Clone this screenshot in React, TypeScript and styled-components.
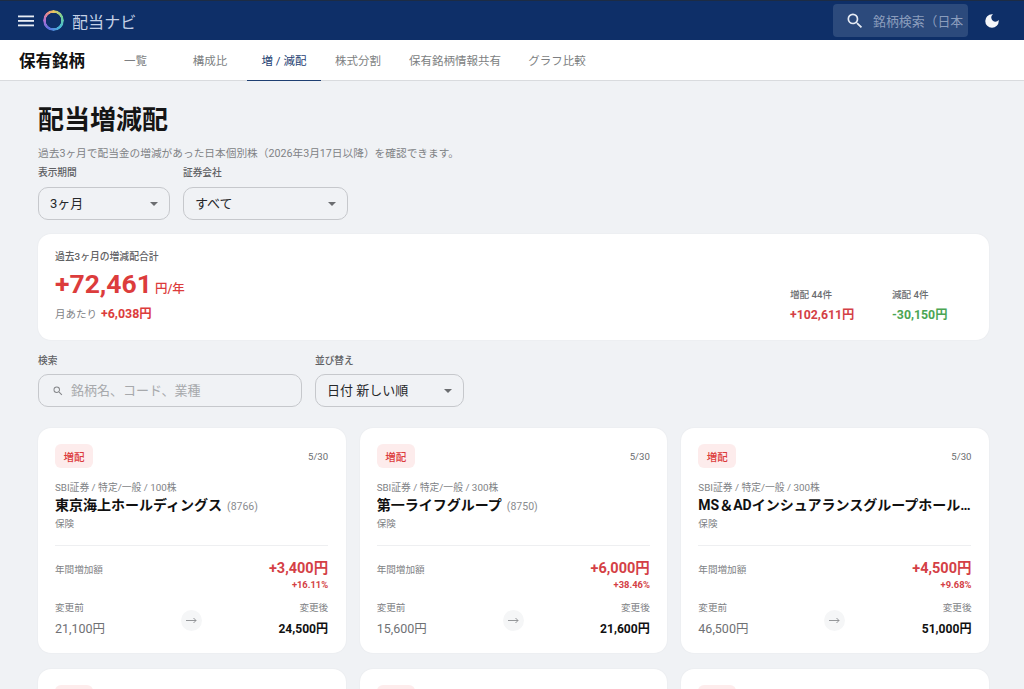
import React from "react";
import styled, { createGlobalStyle } from "styled-components";

const Global = createGlobalStyle`
  html, body { margin: 0; padding: 0; height: 100%; overflow: hidden; background: #f0f2f5; }
  body { font-family: Roboto, "Noto Sans CJK JP", sans-serif; color: #111; }
  * { box-sizing: border-box; }
`;

const Page = styled.div`display: flex; flex-direction: column; height: 689px; overflow: hidden;`;

const Header = styled.header`
  height: 40px; flex: none; background: #0e2f68; border-top: 1px solid #1d2c44;
  display: flex; align-items: center; padding: 0 23px 0 18px; color: #fff;
`;
const Brand = styled.div`display: flex; align-items: center; gap: 8px; margin-left: 9px; flex: 1;`;
const Ring = styled.div`
  width: 21px; height: 21px; border-radius: 50%;
  background: conic-gradient(#e9c65b 0deg, #6ecf9a 70deg, #45b7d8 140deg, #5b6fe0 210deg, #b06fd0 270deg, #e88a8a 320deg, #e9c65b 360deg);
  -webkit-mask: radial-gradient(circle, transparent 7.5px, #000 8px);
  mask: radial-gradient(circle, transparent 7.5px, #000 8px);
`;
const BrandName = styled.span`font-size: 16px; color: #c5d1e6; letter-spacing: 0.1px;`;
const HeaderSearch = styled.div`
  width: 135px; height: 33px; background: #2c4a7c; border-radius: 4px;
  display: flex; align-items: center; gap: 8px; padding: 0 5px 0 12px; overflow: hidden;
`;
const HeaderPlaceholder = styled.span`font-size: 12.9px; color: #8b9dbc; white-space: nowrap; overflow: hidden; flex: 1; min-width: 0;`;
const SearchGlyph = styled.span`flex: none; display: flex;`;
const MoonWrap = styled.div`margin-left: 15px; width: 18px; height: 18px; display: flex;`;

const TabBar = styled.nav`
  height: 41px; flex: none; background: #fff; border-bottom: 1px solid #d9dbde;
  display: flex; align-items: stretch; padding-left: 19px;
`;
const PageName = styled.div`
  font-size: 16.5px; font-weight: 700; width: 79px; display: flex; align-items: center; color: #111; white-space: nowrap;
`;
const Tab = styled.div<{ $active?: boolean; $w?: number }>`
  width: ${(p) => p.$w}px; display: flex; align-items: center; justify-content: center; white-space: nowrap;
  font-size: 11.5px; color: ${(p) => (p.$active ? "#1e3f72" : "#7d7f82")};
  margin-bottom: -1px;
  border-bottom: ${(p) => (p.$active ? "1.5px solid #1e3f72" : "1.5px solid transparent")};
`;

const Main = styled.main`flex: 1; padding: 21px 35px 0 38px; overflow: hidden;`;
const Title = styled.h1`font-size: 26px; font-weight: 700; line-height: 36px; margin: 0; color: #151515;`;
const Sub = styled.p`font-size: 10.7px; line-height: 14px; margin: 9px 0 0; color: #808285; white-space: nowrap;`;
const FilterRow = styled.div`display: flex; gap: 13px; margin-top: 5px;`;
const Field = styled.div<{ $w: number }>`width: ${(p) => p.$w}px; display: flex; flex-direction: column;`;
const Label = styled.label`font-size: 9.7px; line-height: 14px; color: #5f6164; font-weight: 500; margin-bottom: 7px;`;
const SelectBox = styled.div`
  height: 33px; border: 1px solid #c6c8cc; border-radius: 10px;
  display: flex; align-items: center; justify-content: space-between; padding: 0 11px 3px 11px;
  font-size: 13px; color: #26282b;
`;
const Caret = styled.span`width: 0; height: 0; margin-top: 3px; border-left: 4px solid transparent; border-right: 4px solid transparent; border-top: 4px solid #6b6d70;`;
const SearchBox = styled(SelectBox)`justify-content: flex-start; gap: 7px; padding-left: 13px; color: #a7a9ac;`;
const SearchBoxIcon = styled.span`display: flex; margin-top: 3px;`;

const Summary = styled.section`
  height: 106px; margin-top: 14px; background: #fff; border-radius: 13px;
  box-shadow: 0 0 2px rgba(0,0,0,0.06); padding: 16px 17px 0;
  display: flex; justify-content: space-between;
`;
const SummaryLabel = styled.div`font-size: 9.8px; line-height: 14px; color: #5f6164; font-weight: 500;`;
const Total = styled.div`display: flex; align-items: baseline; gap: 3px; margin-top: 4px; color: #dc3c3c; line-height: 32px;`;
const TotalNum = styled.span`font-size: 26.5px; font-weight: 700;`;
const TotalUnit = styled.span`font-size: 12.5px; font-weight: 500;`;
const Monthly = styled.div`display: flex; align-items: baseline; gap: 4px; margin-top: 1px; font-size: 10.5px; color: #808285; line-height: 16px;`;
const MonthlyValue = styled.span`font-size: 12.4px; font-weight: 700; color: #dc3c3c;`;
const Stats = styled.div`display: flex; margin-top: 38px; margin-right: 25px;`;
const Stat = styled.div<{ $w: number }>`width: ${(p) => p.$w}px;`;
const StatLabel = styled.div`font-size: 9.6px; line-height: 14px; color: #6b6d70; font-weight: 500;`;
const StatValue = styled.div<{ $up?: boolean }>`font-size: 12.3px; line-height: 16px; margin-top: 5px; font-weight: 700; white-space: nowrap; color: ${(p) => (p.$up ? "#d43f46" : "#4ba553")};`;

const ControlRow = styled(FilterRow)`margin-top: 14px; ${Label} { margin-bottom: 6px; }`;

const Grid = styled.div`display: grid; grid-template-columns: repeat(3, minmax(0, 1fr)); column-gap: 14px; row-gap: 16px; margin-top: 21px;`;
const Card = styled.article`
  height: 225px; min-width: 0; background: #fff; border-radius: 13px; box-shadow: 0 0 2px rgba(0,0,0,0.06); padding: 16px 17.5px 0 17px;
  display: flex; flex-direction: column;
`;
const CardTop = styled.div`display: flex; justify-content: space-between; align-items: center;`;
const Badge = styled.span`
  font-size: 10.5px; font-weight: 500; color: #dc3c3c; background: #fdecec; border-radius: 6px; height: 24px; width: 38px;
  display: flex; align-items: center; justify-content: center;
`;
const DateText = styled.span`font-size: 9.6px; color: #6b6d70;`;
const Meta = styled.div`font-size: 9.8px; line-height: 13px; color: #808285; margin-top: 13px; white-space: nowrap;`;
const NameRow = styled.div`display: flex; align-items: baseline; gap: 5px; margin-top: 2px; white-space: nowrap; height: 20px; line-height: 19px; min-width: 0;`;
const Name = styled.span`font-size: 14px; font-weight: 700; color: #111; overflow: hidden; text-overflow: ellipsis; min-width: 0;`;
const Code = styled.span`font-size: 10.5px; color: #8a8c8f; flex: none;`;
const Sector = styled.div`font-size: 9.6px; line-height: 13px; color: #808285; margin-top: 1px;`;
const Divider = styled.hr`border: 0; border-top: 1px solid #eeeff1; margin: 15px 0 0; width: 100%;`;
const Increase = styled.div`display: flex; justify-content: space-between; margin-top: 14px;`;
const MutedLabel = styled.div`font-size: 9.6px; line-height: 14px; color: #808285;`;
const IncreaseLabel = styled(MutedLabel)`margin-top: 3px;`;
const IncreaseValues = styled.div`text-align: right;`;
const IncreaseAmount = styled.div`font-size: 14.5px; line-height: 18px; font-weight: 700; color: #d43f46;`;
const IncreasePct = styled.div`font-size: 9.4px; line-height: 12px; margin-top: 1px; font-weight: 700; color: #d43f46;`;
const Change = styled.div`display: flex; justify-content: space-between; align-items: center; margin-top: 10px;`;
const Side = styled.div<{ $right?: boolean }>`text-align: ${(p) => (p.$right ? "right" : "left")}; width: 90px;`;
const Price = styled.div<{ $strong?: boolean }>`
  font-size: ${(p) => (p.$strong ? "12.1px" : "12.5px")}; line-height: 16px; margin-top: 6px;
  font-weight: ${(p) => (p.$strong ? 700 : 400)}; color: ${(p) => (p.$strong ? "#111" : "#6f7174")};
`;
const ArrowDot = styled.div`
  width: 21px; height: 21px; border-radius: 50%; background: #f5f6f7; color: #8a8c8f;
  display: flex; align-items: center; justify-content: center; margin-top: 2px;
`;

const MagnifierIcon = ({ size, color }: { size: number; color: string }) => (
  <svg width={size} height={size} viewBox="0 0 24 24" fill={color}>
    <path d="M15.5 14h-.79l-.28-.27A6.47 6.47 0 0 0 16 9.5 6.5 6.5 0 1 0 9.5 16c1.61 0 3.09-.59 4.23-1.57l.27.28v.79l5 4.99L20.49 19l-4.99-5zm-6 0C7.01 14 5 11.99 5 9.5S7.01 5 9.5 5 14 7.01 14 9.5 11.99 14 9.5 14z" />
  </svg>
);

const MenuIcon = () => (
  <svg width="16" height="12" viewBox="0 0 16 12" fill="#e8edf5">
    <rect x="0" y="0.5" width="16" height="1.8" />
    <rect x="0" y="5" width="16" height="1.8" />
    <rect x="0" y="9.5" width="16" height="1.8" />
  </svg>
);

const MoonIcon = () => (
  <svg width="18" height="18" viewBox="0 0 24 24" fill="#f4f6fa">
    <path d="M12 3a9 9 0 1 0 9 9c0-.46-.04-.92-.1-1.36a5.39 5.39 0 0 1-4.4 2.26 5.4 5.4 0 0 1-3.14-9.8C12.92 3.04 12.46 3 12 3z" />
  </svg>
);

const ArrowIcon = () => (
  <svg width="11" height="7" viewBox="0 0 11 7" fill="none" stroke="#8a8c8f" strokeWidth="0.9">
    <path d="M0 3.5h10M7.5 1l2.5 2.5L7.5 6" />
  </svg>
);

type CardData = { meta: string; name: string; code?: string; sector: string; amount: string; pct: string; before: string; after: string };

const cards: CardData[] = [
  { meta: "SBI証券 / 特定/一般 / 100株", name: "東京海上ホールディングス", code: "(8766)", sector: "保険", amount: "+3,400円", pct: "+16.11%", before: "21,100円", after: "24,500円" },
  { meta: "SBI証券 / 特定/一般 / 300株", name: "第一ライフグループ", code: "(8750)", sector: "保険", amount: "+6,000円", pct: "+38.46%", before: "15,600円", after: "21,600円" },
  { meta: "SBI証券 / 特定/一般 / 300株", name: "MS＆ADインシュアランスグループホールディングス", sector: "保険", amount: "+4,500円", pct: "+9.68%", before: "46,500円", after: "51,000円" },
];

const tabs = [
  { label: "一覧", w: 75 },
  { label: "構成比", w: 74 },
  { label: "増 / 減配", w: 74, active: true },
  { label: "株式分割", w: 74 },
  { label: "保有銘柄情報共有", w: 120 },
  { label: "グラフ比較", w: 84 },
];

const StockCard = ({ c }: { c: CardData }) => (
  <Card>
    <CardTop>
      <Badge>増配</Badge>
      <DateText>5/30</DateText>
    </CardTop>
    <Meta>{c.meta}</Meta>
    <NameRow>
      <Name>{c.name}</Name>
      {c.code && <Code>{c.code}</Code>}
    </NameRow>
    <Sector>{c.sector}</Sector>
    <Divider />
    <Increase>
      <IncreaseLabel>年間増加額</IncreaseLabel>
      <IncreaseValues>
        <IncreaseAmount>{c.amount}</IncreaseAmount>
        <IncreasePct>{c.pct}</IncreasePct>
      </IncreaseValues>
    </Increase>
    <Change>
      <Side>
        <MutedLabel>変更前</MutedLabel>
        <Price>{c.before}</Price>
      </Side>
      <ArrowDot><ArrowIcon /></ArrowDot>
      <Side $right>
        <MutedLabel>変更後</MutedLabel>
        <Price $strong>{c.after}</Price>
      </Side>
    </Change>
  </Card>
);

export default function App() {
  return (
    <Page>
      <Global />
      <Header>
        <MenuIcon />
        <Brand>
          <Ring />
          <BrandName>配当ナビ</BrandName>
        </Brand>
        <HeaderSearch>
          <SearchGlyph><MagnifierIcon size={20} color="#e6ebf4" /></SearchGlyph>
          <HeaderPlaceholder>銘柄検索（日本株）</HeaderPlaceholder>
        </HeaderSearch>
        <MoonWrap><MoonIcon /></MoonWrap>
      </Header>
      <TabBar>
        <PageName>保有銘柄</PageName>
        {tabs.map((t) => (
          <Tab key={t.label} $w={t.w} $active={t.active}>{t.label}</Tab>
        ))}
      </TabBar>
      <Main>
        <Title>配当増減配</Title>
        <Sub>過去3ヶ月で配当金の増減があった日本個別株（2026年3月17日以降）を確認できます。</Sub>
        <FilterRow>
          <Field $w={132}>
            <Label>表示期間</Label>
            <SelectBox>3ヶ月<Caret /></SelectBox>
          </Field>
          <Field $w={165}>
            <Label>証券会社</Label>
            <SelectBox>すべて<Caret /></SelectBox>
          </Field>
        </FilterRow>
        <Summary>
          <div>
            <SummaryLabel>過去3ヶ月の増減配合計</SummaryLabel>
            <Total>
              <TotalNum>+72,461</TotalNum>
              <TotalUnit>円/年</TotalUnit>
            </Total>
            <Monthly>月あたり<MonthlyValue>+6,038円</MonthlyValue></Monthly>
          </div>
          <Stats>
            <Stat $w={102}>
              <StatLabel>増配 44件</StatLabel>
              <StatValue $up>+102,611円</StatValue>
            </Stat>
            <Stat $w={55}>
              <StatLabel>減配 4件</StatLabel>
              <StatValue>-30,150円</StatValue>
            </Stat>
          </Stats>
        </Summary>
        <ControlRow>
          <Field $w={264}>
            <Label>検索</Label>
            <SearchBox>
              <SearchBoxIcon><MagnifierIcon size={12} color="#85878a" /></SearchBoxIcon>
              銘柄名、コード、業種
            </SearchBox>
          </Field>
          <Field $w={149}>
            <Label>並び替え</Label>
            <SelectBox>日付 新しい順<Caret /></SelectBox>
          </Field>
        </ControlRow>
        <Grid>
          {cards.map((c) => <StockCard key={c.name} c={c} />)}
          {cards.map((c) => <StockCard key={c.name + "-2"} c={c} />)}
        </Grid>
      </Main>
    </Page>
  );
}
